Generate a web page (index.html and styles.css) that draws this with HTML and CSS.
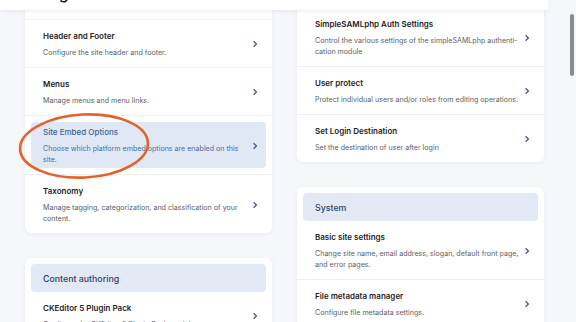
FILE: index.html
```html
<!DOCTYPE html>
<html lang="en">

<head>
    <meta charset="UTF-8">
    <meta name="viewport" content="width=device-width, initial-scale=1.0">
    <title>Configuration</title>
    <link rel="stylesheet" href="styles.css">
</head>

<body>
    <header class="topbar">
        <h1>Configuration</h1>
    </header>

    <main class="page">
        <div class="column">
            <!-- panel scrolled past its heading -->
            <section class="panel panel-scrolled panel-scrolled-left">
                <ul class="panel-list">
                    <li>
                        <a class="item" href="#">
                            <span class="item-text">
                                <span class="item-title">Header and Footer</span>
                                <span class="item-desc">Configure the site header and footer.</span>
                            </span>
                            <svg class="chevron" viewBox="0 0 6 8"><path d="M1.6 1.2 L4.4 4 L1.6 6.8" /></svg>
                        </a>
                    </li>
                    <li>
                        <a class="item" href="#">
                            <span class="item-text">
                                <span class="item-title">Menus</span>
                                <span class="item-desc">Manage menus and menu links.</span>
                            </span>
                            <svg class="chevron" viewBox="0 0 6 8"><path d="M1.6 1.2 L4.4 4 L1.6 6.8" /></svg>
                        </a>
                    </li>
                    <li>
                        <a class="item item-active" href="#">
                            <span class="item-text">
                                <span class="item-title">Site Embed Options</span>
                                <span class="item-desc">Choose which platform embed options are enabled on this site.</span>
                            </span>
                            <svg class="chevron" viewBox="0 0 6 8"><path d="M1.6 1.2 L4.4 4 L1.6 6.8" /></svg>
                        </a>
                    </li>
                    <li>
                        <a class="item" href="#">
                            <span class="item-text">
                                <span class="item-title">Taxonomy</span>
                                <span class="item-desc">Manage tagging, categorization, and classification of your content.</span>
                            </span>
                            <svg class="chevron" viewBox="0 0 6 8"><path d="M1.6 1.2 L4.4 4 L1.6 6.8" /></svg>
                        </a>
                    </li>
                </ul>
            </section>

            <section class="panel">
                <h2 class="panel-title">Content authoring</h2>
                <ul class="panel-list">
                    <li>
                        <a class="item" href="#">
                            <span class="item-text">
                                <span class="item-title">CKEditor 5 Plugin Pack</span>
                                <span class="item-desc">Configure the CKEditor 5 Plugin Pack module.</span>
                            </span>
                            <svg class="chevron" viewBox="0 0 6 8"><path d="M1.6 1.2 L4.4 4 L1.6 6.8" /></svg>
                        </a>
                    </li>
                </ul>
            </section>
        </div>

        <div class="column">
            <section class="panel panel-scrolled panel-scrolled-right">
                <ul class="panel-list">
                    <li>
                        <a class="item" href="#">
                            <span class="item-text">
                                <span class="item-title">SimpleSAMLphp Auth Settings</span>
                                <span class="item-desc">Control the various settings of the simpleSAMLphp authenti&shy;cation module</span>
                            </span>
                            <svg class="chevron" viewBox="0 0 6 8"><path d="M1.6 1.2 L4.4 4 L1.6 6.8" /></svg>
                        </a>
                    </li>
                    <li>
                        <a class="item" href="#">
                            <span class="item-text">
                                <span class="item-title">User protect</span>
                                <span class="item-desc">Protect individual users and/or roles from editing operations.</span>
                            </span>
                            <svg class="chevron" viewBox="0 0 6 8"><path d="M1.6 1.2 L4.4 4 L1.6 6.8" /></svg>
                        </a>
                    </li>
                    <li>
                        <a class="item" href="#">
                            <span class="item-text">
                                <span class="item-title">Set Login Destination</span>
                                <span class="item-desc">Set the destination of user after login</span>
                            </span>
                            <svg class="chevron" viewBox="0 0 6 8"><path d="M1.6 1.2 L4.4 4 L1.6 6.8" /></svg>
                        </a>
                    </li>
                </ul>
            </section>

            <section class="panel">
                <h2 class="panel-title">System</h2>
                <ul class="panel-list">
                    <li>
                        <a class="item" href="#">
                            <span class="item-text">
                                <span class="item-title">Basic site settings</span>
                                <span class="item-desc">Change site name, email address, slogan, default front page, and error pages.</span>
                            </span>
                            <svg class="chevron" viewBox="0 0 6 8"><path d="M1.6 1.2 L4.4 4 L1.6 6.8" /></svg>
                        </a>
                    </li>
                    <li>
                        <a class="item" href="#">
                            <span class="item-text">
                                <span class="item-title">File metadata manager</span>
                                <span class="item-desc">Configure file metadata settings.</span>
                            </span>
                            <svg class="chevron" viewBox="0 0 6 8"><path d="M1.6 1.2 L4.4 4 L1.6 6.8" /></svg>
                        </a>
                    </li>
                </ul>
            </section>
        </div>
    </main>

    <!-- annotation drawn over the screenshot -->
    <svg class="highlight-ring" viewBox="0 0 136 72">
        <ellipse cx="68" cy="36" rx="64" ry="31.5" />
    </svg>

    <div class="scrollbar"></div>
</body>

</html>
```

FILE: styles.css
```css
:root {
    --bg: #f6f7fb;
    --text: #1f2128;
    --muted: #5a5e66;
    --line: #eceef2;
    --band: #e3e9f4;
    --band-text: #2d4468;
    --active: #e0e8f5;
    --active-text: #40629a;
    --chevron: #3d5a88;
}

html,
body {
    overflow: hidden;
}

body {
    margin: 0;
    font-family: Inter, 'Noto Sans', sans-serif;
    background-color: var(--bg);
    color: var(--text);
}

.topbar {
    position: fixed;
    top: 0;
    left: 0;
    width: 548px;
    height: 10px;
    background-color: #fff;
    box-shadow: 0 2px 4px rgba(0, 0, 0, 0.06);
    z-index: 2;
    overflow: hidden;
}

.topbar h1 {
    margin: -17px 0 0 0;
    padding-left: 17px;
    font-size: 16px;
    line-height: 20px;
    font-weight: 600;
}

.page {
    display: grid;
    grid-template-columns: 247px 247px;
    column-gap: 25px;
    align-items: start;
    padding: 0 32px 0 25px;
    margin-top: -10px;
}

.column {
    display: flex;
    flex-direction: column;
    gap: 25px;
}

.panel {
    background-color: #fff;
    border-radius: 6px;
    box-shadow: 0 1px 4px rgba(30, 40, 70, 0.06);
    padding-top: 6px;
}

.panel-scrolled-left {
    padding-top: 29px;
}

.panel-scrolled-left .panel-list {
    border-top: 1px solid var(--line);
}

.panel-scrolled-right {
    padding-top: 18px;
}

.panel-title {
    margin: 0 6px;
    height: 28px;
    padding: 0 12px;
    display: flex;
    align-items: center;
    background-color: var(--band);
    border-radius: 4px;
    color: var(--band-text);
    font-size: 8.8px;
    font-weight: 500;
}

.panel-list {
    list-style: none;
    margin: 0;
    padding: 0;
}

.panel-list li {
    border-bottom: 1px solid var(--line);
}

.panel-list li:last-child {
    border-bottom: none;
}

.item {
    display: flex;
    align-items: center;
    margin: 6px;
    padding: 4px 6px 3px 12px;
    border-radius: 4px;
    text-decoration: none;
    color: inherit;
}

.item-text {
    flex: 1;
    min-width: 0;
}

.item-title {
    display: block;
    font-size: 8px;
    line-height: 12px;
    font-weight: 600;
}

.item-desc {
    display: block;
    margin-top: 5px;
    font-size: 7.1px;
    line-height: 11px;
    color: var(--muted);
}

.chevron {
    width: 10px;
    height: 8px;
    flex: none;
    fill: none;
    stroke: var(--chevron);
    stroke-width: 1.3;
}

.item-active {
    background-color: var(--active);
}

.item-active .item-title {
    color: var(--active-text);
    font-weight: 500;
}

.item-active .item-desc {
    color: #4f6c98;
}

.highlight-ring {
    position: absolute;
    left: 16px;
    top: 110px;
    width: 136px;
    height: 72px;
    overflow: visible;
    transform: rotate(-3deg);
    fill: none;
    stroke: #e4622a;
    stroke-width: 2.6;
}

.scrollbar {
    position: fixed;
    top: 14px;
    right: 2px;
    width: 4px;
    height: 62px;
    border-radius: 2px;
    background-color: #8b8b8b;
}
```
